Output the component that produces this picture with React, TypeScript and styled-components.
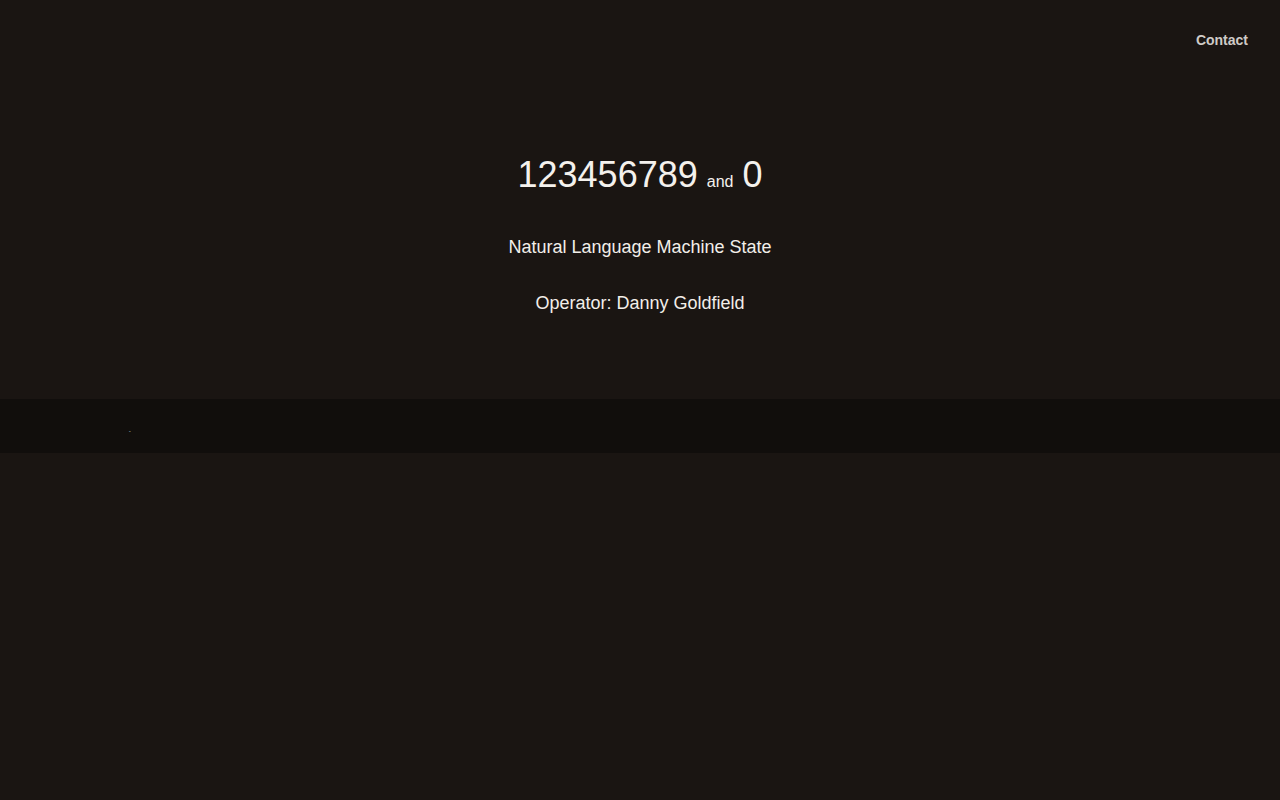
import React from "react";
import styled, { createGlobalStyle } from "styled-components";

const Global = createGlobalStyle`
  html, body { margin: 0; padding: 0; background: #1a1512; }
  body { font-family: "Liberation Sans", Arial, sans-serif; color: #f2eee9; }
`;

const Page = styled.div`
  min-height: 100vh;
  background: #1a1512;
  display: flex;
  flex-direction: column;
`;

const Header = styled.header`
  height: 80px;
  display: flex;
  justify-content: flex-end;
  align-items: center;
  padding: 0 32px;
`;

const NavLink = styled.a`
  font-size: 14px;
  font-weight: 700;
  color: #cfcbc7;
  text-decoration: none;
  cursor: pointer;
`;

const Hero = styled.section`
  height: 319px;
  box-sizing: border-box;
  padding-top: 73px;
  display: flex;
  flex-direction: column;
  align-items: center;
  text-align: center;
`;

const Title = styled.h1`
  margin: 0;
  font-size: 36px;
  font-weight: 400;
  line-height: 43px;
  color: #f4f1ed;
`;

const Small = styled.span`
  font-size: 16px;
  margin: 0 9px;
`;

const Line = styled.p<{ $gap: number }>`
  margin: ${(p) => p.$gap}px 0 0;
  font-size: 18px;
  line-height: 21px;
  color: #f2eee9;
`;

const Footer = styled.footer`
  height: 54px;
  background: #110e0c;
  display: flex;
  align-items: center;
  padding-left: 129px;
`;

const Tiny = styled.span`
  font-size: 5px;
  line-height: 5px;
  color: #dfe6ee;
  margin-top: 10px;
`;

export default function App() {
  return (
    <>
      <Global />
      <Page>
        <Header>
          <NavLink>Contact</NavLink>
        </Header>
        <Hero>
          <Title>
            123456789<Small>and</Small>0
          </Title>
          <Line $gap={34}>Natural Language Machine State</Line>
          <Line $gap={35}>Operator: Danny Goldfield</Line>
        </Hero>
        <Footer>
          <Tiny>-</Tiny>
        </Footer>
      </Page>
    </>
  );
}
